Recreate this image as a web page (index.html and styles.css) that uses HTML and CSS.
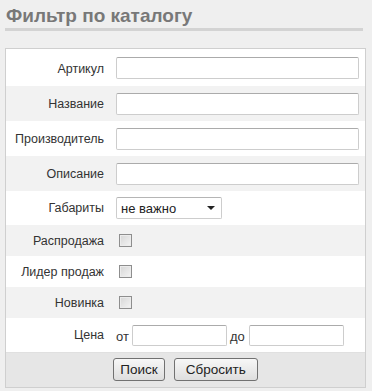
FILE: index.html
```html
<!DOCTYPE html>
<html lang="ru">
<head>
  <meta charset="UTF-8" />
  <title>Фильтр по каталогу</title>
  <link rel="stylesheet" href="styles.css">
</head>
<body>

  <h2 class="title">Фильтр по каталогу</h2>

  <!-- Catalog filter -->
  <form class="filter">
    <table class="filter-table">
      <tr class="row-text">
        <td class="label">Артикул</td>
        <td class="field"><input type="text" class="text-input"></td>
      </tr>
      <tr class="row-text alt">
        <td class="label">Название</td>
        <td class="field"><input type="text" class="text-input"></td>
      </tr>
      <tr class="row-text">
        <td class="label">Производитель</td>
        <td class="field"><input type="text" class="text-input"></td>
      </tr>
      <tr class="row-text alt">
        <td class="label">Описание</td>
        <td class="field"><input type="text" class="text-input"></td>
      </tr>
      <tr class="row-select">
        <td class="label">Габариты</td>
        <td class="field">
          <span class="select-wrap">
            <select class="select">
              <option>не важно</option>
            </select>
          </span>
        </td>
      </tr>
      <tr class="row-check alt">
        <td class="label">Распродажа</td>
        <td class="field"><input type="checkbox" class="check"></td>
      </tr>
      <tr class="row-check">
        <td class="label">Лидер продаж</td>
        <td class="field"><input type="checkbox" class="check"></td>
      </tr>
      <tr class="row-check alt">
        <td class="label">Новинка</td>
        <td class="field"><input type="checkbox" class="check"></td>
      </tr>
      <tr class="row-price">
        <td class="label">Цена</td>
        <td class="field">
          <div class="price">
            <span class="price-word">от</span>
            <input type="text" class="text-input price-input">
            <span class="price-word">до</span>
            <input type="text" class="text-input price-input">
          </div>
        </td>
      </tr>
    </table>

    <div class="actions">
      <button type="button" class="btn">Поиск</button>
      <button type="button" class="btn">Сбросить</button>
    </div>
  </form>

</body>
</html>
```

FILE: styles.css
```css
* {
  box-sizing: border-box;
}

body {
  margin: 0;
  padding: 0 6px 0 5px;
  background: #efefef;
  color: #333;
  font-family: 'Liberation Sans', Arial, sans-serif;
  font-size: 12.5px;
}

.title {
  margin: 0 3px 0 0;
  padding: 4px 0 0 1px;
  height: 31px;
  font-size: 19px;
  font-weight: bold;
  color: #787878;
  border-bottom: 3px solid #d3d3d3;
  line-height: 23px;
}

.filter {
  margin-top: 17px;
  background: #fff;
  border: 1px solid #cfcfcf;
}

.filter-table {
  width: 100%;
  border-collapse: collapse;
}

.filter-table td {
  padding: 0;
  vertical-align: middle;
}

.filter-table tr.alt {
  background: #f2f2f2;
}

.row-text td {
  height: 35px;
}

.row-text:first-child td {
  height: 37px;
  padding-top: 2px;
}

.row-select td {
  height: 34px;
}

.row-check td {
  height: 31px;
}

.row-price td {
  height: 34px;
}

.label {
  width: 104px;
  padding-right: 6px !important;
  text-align: right;
  white-space: nowrap;
  color: #333;
}

.field {
  padding: 0 6px 0 6px !important;
}

.text-input {
  display: block;
  width: 100%;
  height: 22px;
  margin: 0;
  padding: 0 4px;
  border: 1px solid #cdcdcd;
  border-top-color: #ababab;
  border-radius: 2px;
  background: #fff;
  font: inherit;
}

/* Select with drawn arrow */
.select-wrap {
  position: relative;
  display: inline-block;
}

.select-wrap::after {
  content: "";
  position: absolute;
  right: 7px;
  top: 9px;
  border-left: 4px solid transparent;
  border-right: 4px solid transparent;
  border-top: 4px solid #222;
  pointer-events: none;
}

.select {
  display: block;
  width: 106px;
  height: 22px;
  margin: 0;
  padding: 0 0 0 4px;
  border: 1px solid #cdcdcd;
  border-top-color: #b5b5b5;
  border-radius: 2px;
  background: #fff;
  color: #222;
  font: inherit;
  font-size: 13px;
  -webkit-appearance: none;
  appearance: none;
}

.check {
  display: block;
  width: 13px;
  height: 13px;
  margin: 0 0 0 3px;
  border: 1px solid #8e8e8e;
  background: linear-gradient(135deg, #d6d6d6, #f4f4f4);
  box-shadow: inset 0 0 0 1px #ececec;
  -webkit-appearance: none;
  appearance: none;
}

/* Price range */
.price {
  display: flex;
  align-items: center;
}

.price-word {
  padding: 3px 3px 0 0;
  font-size: 13px;
}

.price-word + .price-input + .price-word {
  padding: 3px 4px 0 3px;
}

.price-input {
  width: 95px;
  height: 21px;
}

.actions {
  display: flex;
  justify-content: center;
  gap: 9px;
  height: 35px;
  padding-top: 5px;
  background: #e6e6e6;
  border-top: 1px solid #e0e0e0;
}

.btn {
  height: 23px;
  padding: 0 6px;
  border: 1px solid #717171;
  border-radius: 3px;
  background: linear-gradient(#f7f7f7, #dedede);
  color: #222;
  font-family: 'Liberation Sans', Arial, sans-serif;
  font-size: 13.5px;
}

.btn + .btn {
  padding: 0 11px;
}
```
